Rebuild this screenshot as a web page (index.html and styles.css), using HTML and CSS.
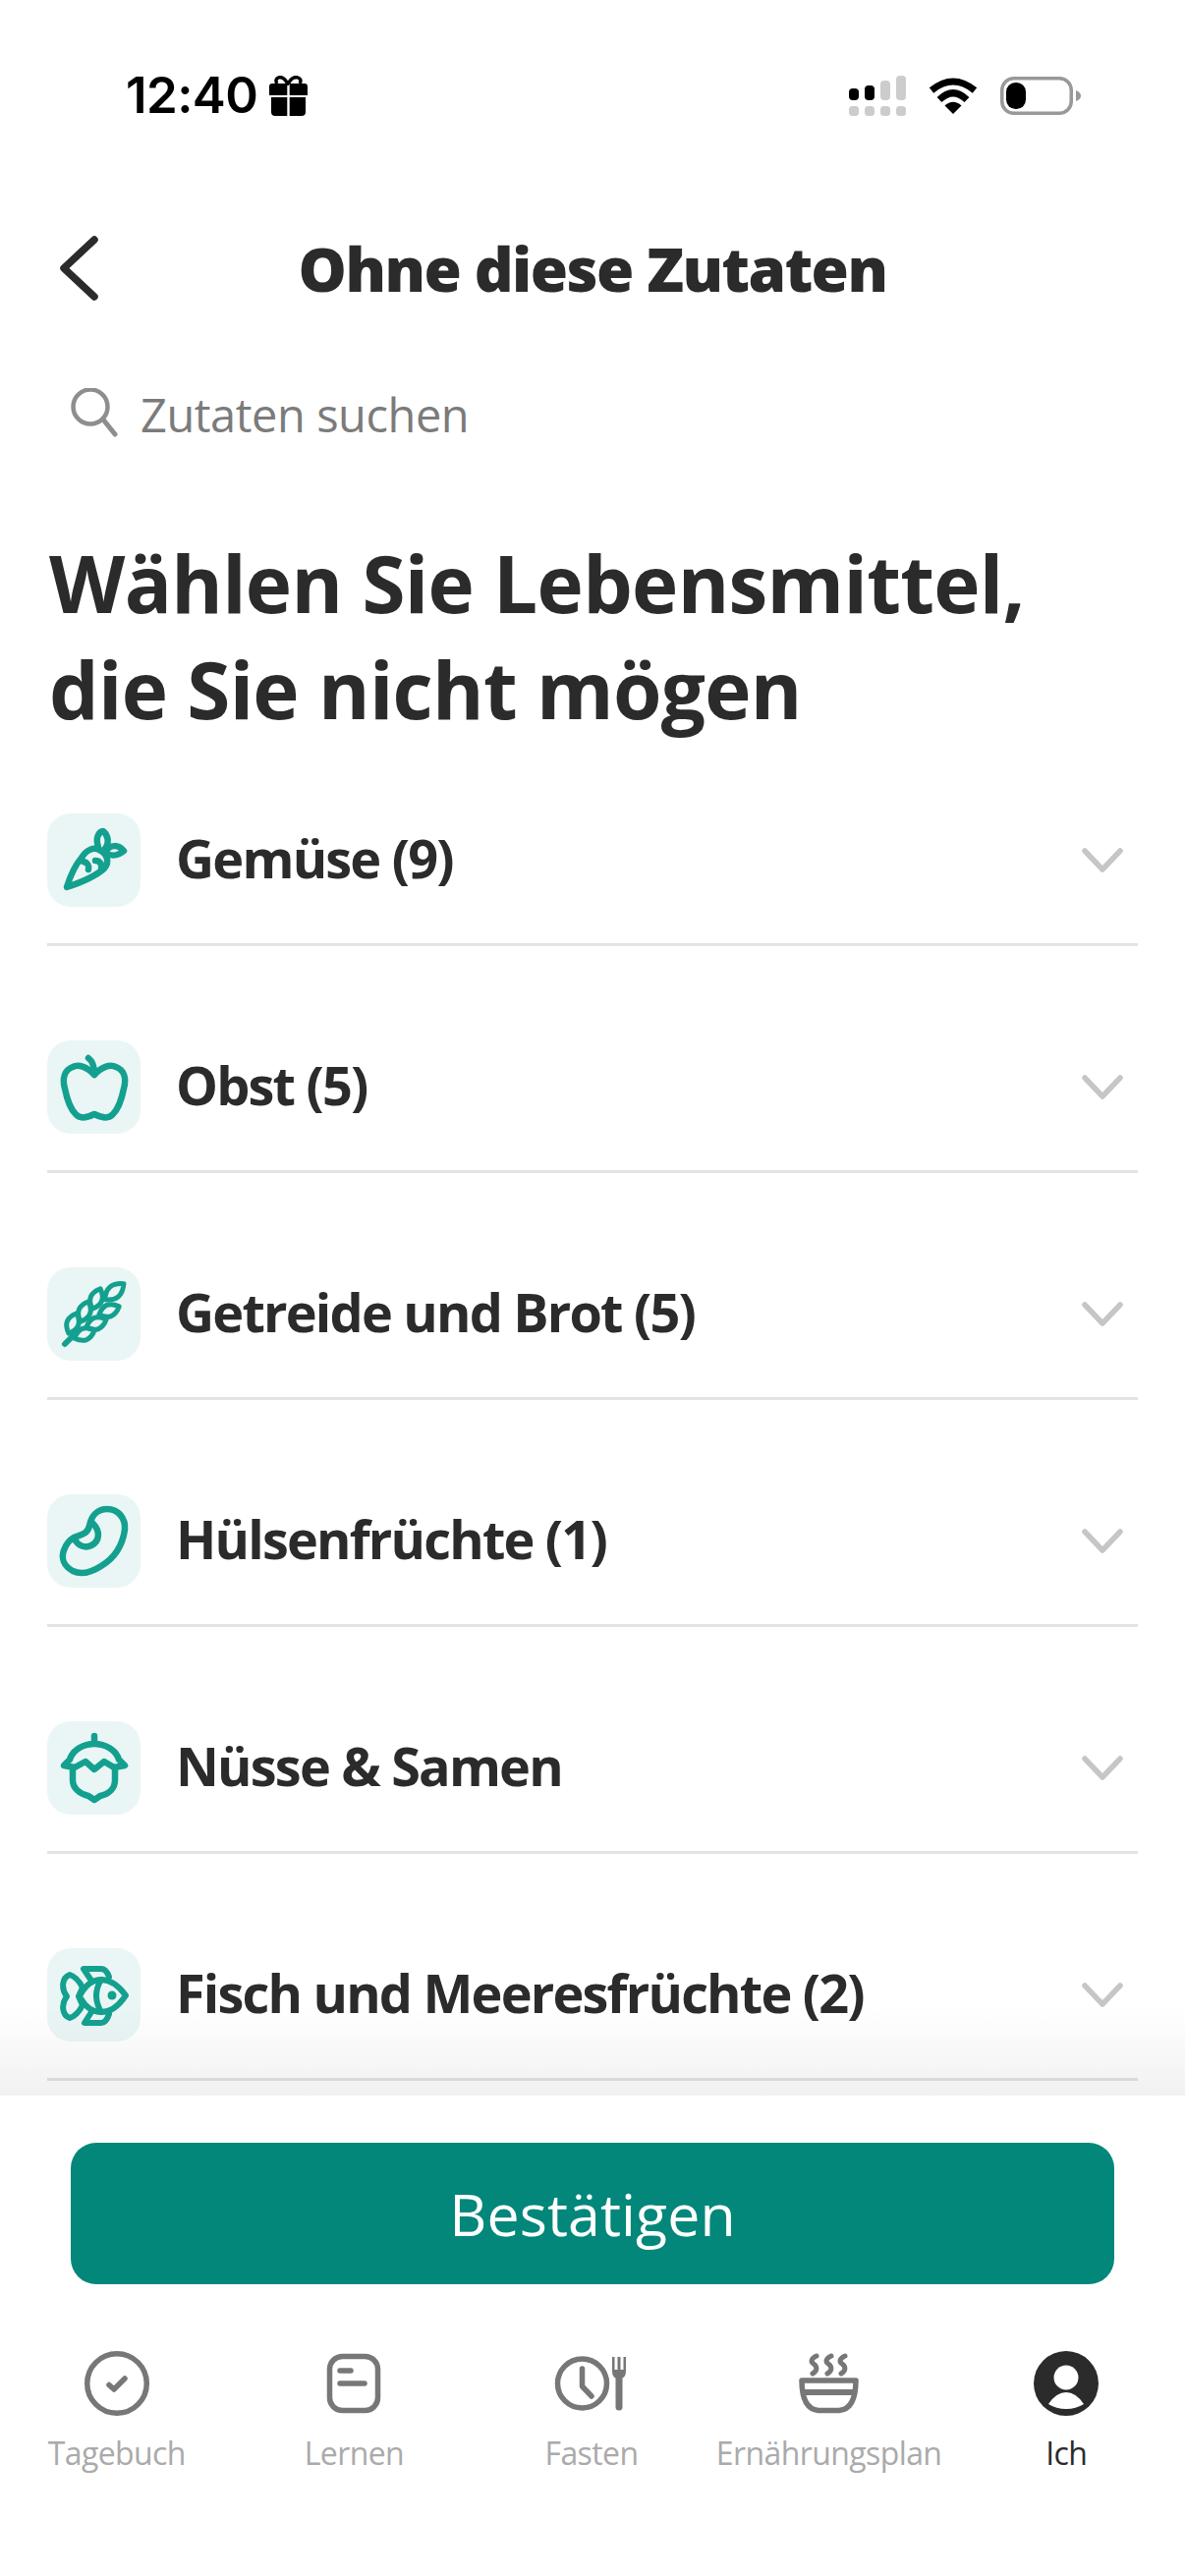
FILE: index.html
```html
<!DOCTYPE html>
<html lang="de">
<head>
<meta charset="utf-8">
<title>Ohne diese Zutaten</title>
<link rel="stylesheet" href="styles.css">
</head>
<body>
<div class="page">
  <div class="status">
    <div class="status-left">
      <span class="time">12:40</span>
      <svg class="gift" width="39" height="41" viewBox="0 0 39 41"><path d="M8 8C4 2 13-2 18 7L19 8 20 7C25-2 35 2 31 8" fill="none" stroke="#000" stroke-width="3.5"/><path d="M3 8H18.3V20H0V11Q0 8 3 8ZM20.7 8H36Q39 8 39 11V20H20.7ZM2 22H18.3V41H6Q2 41 2 37ZM20.7 22H37V37Q37 41 33 41H20.7Z"/></svg>
    </div>
    <div class="status-right">
      <svg width="58" height="41" viewBox="0 0 58 41"><g fill="#000"><rect x="0" y="13" width="10" height="12" rx="4"/><rect x="16" y="10" width="10" height="15" rx="4"/></g><g fill="#ccc"><rect x="32" y="5" width="10" height="20" rx="4"/><rect x="48" y="0" width="10" height="25" rx="4"/><rect x="0" y="31" width="10" height="10" rx="3.5"/><rect x="16" y="31" width="10" height="10" rx="3.5"/><rect x="32" y="31" width="10" height="10" rx="3.5"/><rect x="48" y="31" width="10" height="10" rx="3.5"/></g></svg>
      <svg width="50" height="38" viewBox="0 0 50 38"><path d="M3 14Q25-4 47 14M11 23.5Q25 10 39 23.5" fill="none" stroke="#000" stroke-width="7"/><path d="M25 38 16.5 29.5Q25 22 33.5 29.5Z"/></svg>
      <svg width="82" height="39" viewBox="0 0 82 39"><rect x="1.75" y="1.75" width="70.5" height="35.5" rx="12" fill="none" stroke="#999" stroke-width="3.5"/><rect x="6" y="6" width="20" height="27" rx="9.5"/><path d="M77 14Q82 16 82 19.5Q82 23 77 25Z" fill="#999"/></svg>
    </div>
  </div>

  <header class="header">
    <svg class="back" width="42" height="66" viewBox="0 0 42 66"><path d="M36 4 5 33 36 62" fill="none" stroke="#2b2b2b" stroke-width="7.5" stroke-linecap="round" stroke-linejoin="round"/></svg>
    <h2 class="title">Ohne diese Zutaten</h2>
    <span></span>
  </header>

  <div class="search">
    <svg width="48" height="50" viewBox="0 0 48 50"><circle cx="20" cy="19" r="17.5" fill="none" stroke="#8e8e8e" stroke-width="4.5"/><path d="M33 32 45 47" stroke="#8e8e8e" stroke-width="5" stroke-linecap="round"/></svg>
    <span class="search-text">Zutaten suchen</span>
  </div>

  <h1 class="heading">Wählen Sie Lebensmittel,<br>die Sie nicht mögen</h1>

  <main class="list">
    <div class="row">
      <span class="badge"><svg class="food" viewBox="0 0 96 96"><path d="M20 75C24 62 29 52 35 45 40 37 47 34 53 37 61 41 64 49 58 56 48 65 32 71 20 75Z"/><path d="M37 49C41 50 43 53 42 57M49 48C53 48 56 51 55 56"/><path d="M52 34C49 25 52 19 57 18 62 22 64 30 58 37M60 38C64 32 72 31 78 38 72 43 65 44 60 40"/></svg></span>
      <span class="name">Gemüse (9)</span>
      <svg class="chev" width="42" height="26" viewBox="0 0 42 26"><path d="M3 3 21 22 39 3"/></svg>
    </div>
    <div class="row">
      <span class="badge"><svg class="food" viewBox="0 0 96 96"><path d="M48 35C41 27 32 24 26 27 18 30 15 38 18 49 20 59 24 70 29 75 33 80 40 79 48 75 56 79 63 80 67 75 72 70 76 59 78 49 81 38 78 30 70 27 64 24 55 27 48 35Z"/><path d="M42 18C46 21 48 27 48 34"/></svg></span>
      <span class="name">Obst (5)</span>
      <svg class="chev" width="42" height="26" viewBox="0 0 42 26"><path d="M3 3 21 22 39 3"/></svg>
    </div>
    <div class="row">
      <span class="badge"><svg class="food wheat" viewBox="0 0 96 96"><g transform="translate(68 25) rotate(-40)"><path d="M-12 0Q0-13 13 0Q0 13-12 0Z"/></g><g transform="translate(50 32) rotate(-68)"><path d="M-11 0Q0-12 11 0Q0 12-11 0Z"/></g><g transform="translate(38 45) rotate(-68)"><path d="M-11 0Q0-12 11 0Q0 12-11 0Z"/></g><g transform="translate(26 57) rotate(-68)"><path d="M-11 0Q0-12 11 0Q0 12-11 0Z"/></g><g transform="translate(63 44) rotate(-22)"><path d="M-11 0Q0-12 11 0Q0 12-11 0Z"/></g><g transform="translate(50 57) rotate(-22)"><path d="M-11 0Q0-12 11 0Q0 12-11 0Z"/></g><g transform="translate(38 68) rotate(-22)"><path d="M-11 0Q0-12 11 0Q0 12-11 0Z"/></g><path class="stem" d="M18 78 30 66"/></svg></span>
      <span class="name">Getreide und Brot (5)</span>
      <svg class="chev" width="42" height="26" viewBox="0 0 42 26"><path d="M3 3 21 22 39 3"/></svg>
    </div>
    <div class="row">
      <span class="badge"><svg class="food" viewBox="0 0 96 96"><path d="M27 44C34 41 41 41 43 32 45 21 52 15 61 15 72 15 80 24 79 36 77 50 70 64 55 73 44 80 34 82 26 78 17 73 14 65 17 57 19 51 22 47 27 44Z"/><path d="M28 46C32 53 39 55 45 52 53 48 55 38 46 29"/></svg></span>
      <span class="name">Hülsenfrüchte (1)</span>
      <svg class="chev" width="42" height="26" viewBox="0 0 42 26"><path d="M3 3 21 22 39 3"/></svg>
    </div>
    <div class="row">
      <span class="badge"><svg class="food" viewBox="0 0 96 96"><path d="M48 15V22"/><path d="M17 45 23 39C26 29 37 23 48 23 59 23 70 29 73 39L79 45 68 47 58 41 48 49 39 41 28 47Z"/><path d="M26 48V60C26 68 33 74 42 76L48 80 54 76C63 74 69 68 69 60V48"/></svg></span>
      <span class="name">Nüsse &amp; Samen</span>
      <svg class="chev" width="42" height="26" viewBox="0 0 42 26"><path d="M3 3 21 22 39 3"/></svg>
    </div>
    <div class="row">
      <span class="badge"><svg class="food fish" viewBox="0 0 96 96"><path d="M23 27C15 30 14 41 20 49 14 57 15 68 23 71 29 69 33 64 36 58L32 49 36 40C33 34 29 29 23 27Z"/><path d="M33 49C38 39 45 32 55 32 66 32 74 40 80 48 74 57 66 65 55 65 45 65 38 59 33 49Z"/><path d="M55 32Q45 48 55 65"/><path d="M45 33 37 21H55Q60 21 63 29"/><path d="M45 65 38 76H55Q60 76 63 67"/><circle class="eye" cx="66" cy="48" r="4.5"/></svg></span>
      <span class="name">Fisch und Meeresfrüchte (2)</span>
      <svg class="chev" width="42" height="26" viewBox="0 0 42 26"><path d="M3 3 21 22 39 3"/></svg>
    </div>
  </main>

  <footer class="footer">
    <div class="fade"></div>
    <button class="confirm">Bestätigen</button>
    <nav class="tabs">
      <div class="tab">
        <svg class="tabicon" viewBox="0 0 80 70"><circle cx="40" cy="35" r="30.3"/><path d="M32 36.5 37 41 48 30"/></svg>
        <span class="tablabel">Tagebuch</span>
      </div>
      <div class="tab">
        <svg class="tabicon" viewBox="0 0 80 70"><rect x="15.5" y="7.5" width="49" height="55" rx="13"/><path d="M26 22H37M26 35H51"/></svg>
        <span class="tablabel">Lernen</span>
      </div>
      <div class="tab">
        <svg class="tabicon" viewBox="0 0 80 70"><circle cx="30.5" cy="35" r="25"/><path d="M30.5 20V38L40 48"/><path class="solid" d="M61 8H63.5V21H66.5V8H69.5V21H72.5V8H75V22Q75 28 71.5 29.5V59A3.5 3.5 0 0 1 64.5 59V29.5Q61 28 61 22Z"/></svg>
        <span class="tablabel">Fasten</span>
      </div>
      <div class="tab">
        <svg class="tabicon" viewBox="0 0 80 70"><path d="M12 32H67Q67 61 50 62.5H29Q12 61 12 32Z"/><path class="bar" d="M14 44H65"/><path class="steam" d="M27 7C21 10 21 13 24 15 28 18 28 22 23 25M42 7C36 10 36 13 39 15 43 18 43 22 38 25M56 7C50 10 50 13 53 15 57 18 57 22 52 25"/></svg>
        <span class="tablabel">Ernährungsplan</span>
      </div>
      <div class="tab">
        <svg class="tabicon" viewBox="0 0 80 70"><circle class="dark" cx="40" cy="35" r="33"/><circle class="light" cx="40" cy="29" r="12.5"/><path class="light" d="M22 56Q30 44 40 44 50 44 58 56 50 61 40 61 30 61 22 56Z"/></svg>
        <span class="tablabel active">Ich</span>
      </div>
    </nav>
  </footer>
</div>
</body>
</html>
```

FILE: styles.css
```css
* { box-sizing: border-box; }
html, body { margin: 0; padding: 0; background: #fff; }
body { font-family: "Open Sans", "Noto Sans", sans-serif; color: #2b2b2b; }
.page { width: 1206px; height: 2622px; display: flex; flex-direction: column; overflow: hidden; background: #fff; }

.status { height: 194px; flex: none; display: flex; justify-content: space-between; align-items: center; padding: 0 106px 0 128px; }
.status-left { display: flex; align-items: center; gap: 12px; }
.time { font-family: Inter, "Liberation Sans", sans-serif; font-weight: 600; font-size: 51px; line-height: 60px; color: #000; letter-spacing: -0.6px; }
.status-right { display: flex; align-items: center; gap: 23px; }

.header { height: 158px; flex: none; display: grid; grid-template-columns: 1fr auto 1fr; align-items: center; padding: 0 60px; }
.title { margin: 0; font-size: 62px; line-height: 80px; font-weight: 800; letter-spacing: -1.55px; }

.search { margin-top: 40px; height: 60px; flex: none; display: flex; align-items: center; gap: 23px; padding-left: 72px; }
.search-text { font-size: 47px; color: #7b7b7b; letter-spacing: -0.45px; line-height: 60px; }
.search svg { margin-top: -4px; }

.heading { margin: 87px 0 0; padding-left: 50px; font-size: 80px; line-height: 108px; font-weight: 700; letter-spacing: -0.7px; flex: none; }

.list { margin-top: 73px; flex: 1; min-height: 0; padding: 0 48px; display: flex; flex-direction: column; gap: 96px; }
.row { display: flex; align-items: center; gap: 36px; padding-bottom: 37px; border-bottom: 3px solid #e3e3e3; flex: none; padding-right: 15px; }
.badge { width: 95px; height: 95px; border-radius: 24px; background: #eaf6f5; display: flex; flex: none; }
.food { width: 96px; height: 96px; flex: none; fill: none; stroke: #14a08f; stroke-width: 6.5; stroke-linecap: round; stroke-linejoin: round; }
.wheat { stroke-width: 5; }
.wheat .stem { stroke-width: 6; }
.fish { stroke-width: 6; }
.eye { fill: #14a08f; stroke: none; }
.name { flex: 1; font-size: 54px; font-weight: 700; line-height: 70px; letter-spacing: -1.8px; margin-top: -5px; }
.chev { flex: none; fill: none; stroke: #c6c6c6; stroke-width: 5.5; stroke-linecap: round; stroke-linejoin: round; }

.footer { height: 489px; flex: none; position: relative; background: #fff; padding-top: 48px; }
.fade { position: absolute; left: 0; right: 0; bottom: 100%; height: 90px; background: linear-gradient(to bottom, rgba(0,0,0,0), rgba(0,0,0,0.055)); }
.confirm { display: block; width: 1062px; height: 144px; margin: 0 auto; border: 0; border-radius: 26px; background: #02877a; color: #fff; font-family: inherit; font-size: 59px; font-weight: 500; letter-spacing: 0.1px; }

.tabs { margin: 66px 0 0 -2px; display: grid; grid-template-columns: repeat(5, 1fr); }
.tab { display: flex; flex-direction: column; align-items: center; gap: 14px; }
.tabicon { width: 80px; height: 70px; fill: none; stroke: #777; stroke-width: 5.5; stroke-linecap: round; stroke-linejoin: round; }
.tabicon .solid { fill: #777; stroke: none; }
.tabicon .bar { stroke-width: 6; stroke-linecap: butt; }
.tabicon .steam { stroke-width: 5; }
.tabicon .dark { fill: #2b2b2b; stroke: none; }
.tabicon .light { fill: #fff; stroke: none; }
.tablabel { font-size: 32px; line-height: 44px; color: #aaa; letter-spacing: -0.6px; white-space: nowrap; }
.tablabel.active { color: #2b2b2b; }
```
